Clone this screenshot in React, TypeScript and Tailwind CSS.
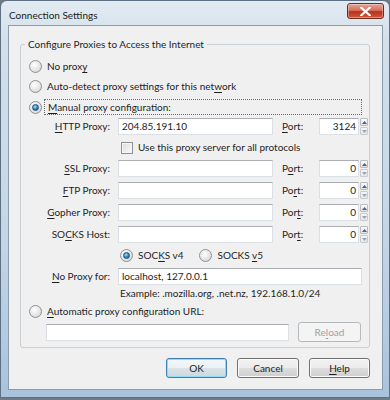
import React from "react";

const Radio = ({ checked = false }: { checked?: boolean }) => (
  <span className="flex h-[13px] w-[13px] shrink-0 items-center justify-center rounded-full border border-[#8e9296] bg-[radial-gradient(circle_at_40%_35%,#ffffff_0%,#eaeaea_45%,#c9cbcd_100%)]">
    {checked && (
      <span className="h-[7px] w-[7px] rounded-full border border-[#1d4f7c] bg-[radial-gradient(circle_at_40%_35%,#b7e3fb_0%,#3a8fc9_45%,#0f4a80_100%)]" />
    )}
  </span>
);

const Field = ({ value = "", className = "" }: { value?: string; className?: string }) => (
  <div
    className={
      "flex h-[17px] items-center border border-[#dbdfe6] border-t-[#abadb3] bg-white px-[3px] text-[#1e1e1e] " +
      className
    }
  >
    {value}
  </div>
);

const Spinner = ({ value }: { value: string }) => (
  <div className="flex h-[17px] items-stretch">
    <div className="flex w-[40px] items-center justify-end border border-[#dbdfe6] border-t-[#abadb3] bg-white pr-[2px] text-[#1e1e1e]">
      {value}
    </div>
    <div className="ml-[1px] flex w-[8px] flex-col gap-[1px]">
      <div className="flex flex-1 items-center justify-center rounded-[1px] border border-[#b8bcc0] bg-[linear-gradient(#fbfbfb,#e3e3e3)]">
        <svg width="5" height="3" viewBox="0 0 5 3">
          <path d="M0 3 L2.5 0 L5 3 Z" fill="#4d6185" />
        </svg>
      </div>
      <div className="flex flex-1 items-center justify-center rounded-[1px] border border-[#c8cbce] bg-[linear-gradient(#f5f5f5,#e6e6e6)]">
        <svg width="5" height="3" viewBox="0 0 5 3">
          <path d="M0 0 L2.5 3 L5 0 Z" fill="#9aa4b4" />
        </svg>
      </div>
    </div>
  </div>
);

const U = ({ children }: { children: React.ReactNode }) => (
  <span className="underline decoration-[1px] underline-offset-[2px]">{children}</span>
);

const Label = ({ children }: { children: React.ReactNode }) => (
  <div className="flex h-[17px] items-center justify-end text-[#1e1e1e]">{children}</div>
);

const PortLabel = ({ children }: { children: React.ReactNode }) => (
  <div className="flex h-[17px] items-center text-[#1e1e1e]">{children}</div>
);

const Button = ({
  children,
  variant = "normal",
  className = "",
}: {
  children: React.ReactNode;
  variant?: "normal" | "default" | "disabled";
  className?: string;
}) => {
  const styles =
    variant === "default"
      ? "border-[#3c7fb1] shadow-[inset_0_0_0_1px_#8fdcf7] bg-[linear-gradient(#f4f8fa_0%,#eaf0f3_50%,#dbe3e8_50%,#ccd7dd_100%)] text-[#1e1e1e]"
      : variant === "disabled"
      ? "border-[#b5b9bc] bg-[#f4f4f4] text-[#a0a0a0]"
      : "border-[#707070] shadow-[inset_0_0_0_1px_#fcfcfc] bg-[linear-gradient(#f2f2f2_0%,#ebebeb_50%,#dddddd_50%,#cfcfcf_100%)] text-[#1e1e1e]";
  return (
    <div
      className={
        "flex h-[20px] items-center justify-center rounded-[3px] border " + styles + " " + className
      }
    >
      {children}
    </div>
  );
};

export default function App() {
  return (
    <div
      className="h-[400px] w-[390px] overflow-hidden bg-[#6f7a85] text-[10px] leading-[13px]"
      style={{ fontFamily: "Lato, 'Open Sans', 'Liberation Sans', sans-serif" }}
    >
      <div className="flex h-[398px] w-[390px] flex-col rounded-t-[7px] border border-[#5d7084] bg-[linear-gradient(180deg,#e2ebf2_0%,#d3e0ea_10%,#c4d6e6_60%,#a9c3dc_100%)] pb-[7px] pl-[7px] pr-[6px]">
        {/* Title bar */}
        <div className="flex h-[24px] items-start justify-between">
          <div className="pl-[1px] pt-[7px] text-[10px] leading-[14px] text-[#1c1c1c]">
            Connection Settings
          </div>
          <div className="mr-[-1px] mt-[2px] flex h-[16px] w-[37px] items-center justify-center rounded-[3px] border border-[#6e2a22] bg-[linear-gradient(#e7a597_0%,#d4725f_45%,#b8321c_55%,#cc5a3c_100%)] shadow-[inset_0_0_0_1px_rgba(255,255,255,0.35)]">
            <svg width="11" height="9" viewBox="0 0 11 9">
              <path
                d="M1 0.5 L5.5 4.5 L10 0.5 M1 8.5 L5.5 4.5 L10 8.5"
                stroke="#ffffff"
                strokeWidth="2.2"
                fill="none"
                strokeLinecap="square"
              />
            </svg>
          </div>
        </div>

        {/* Client area */}
        <div className="flex flex-1 flex-col border border-[#8a9cae] bg-[#f0f0f0] pl-[11px] pr-[12px]">
          <fieldset className="mt-[11px] w-[350px] rounded-[3px] border border-[#c9cfd4] pb-[5px] pl-[8px]">
            <legend className="ml-[-4px] px-[3px] text-[10px] leading-[15px] text-[#1e1e1e]">
              Configure Proxies to Access the Internet
            </legend>

            <div className="mt-[4px] flex h-[20px] items-center gap-[5px] text-[#1e1e1e]">
              <Radio />
              <span>
                No prox<U>y</U>
              </span>
            </div>
            <div className="flex h-[20px] items-center gap-[5px] text-[#1e1e1e]">
              <Radio />
              <span>
                Auto-detect proxy settings for this net<U>w</U>ork
              </span>
            </div>
            <div className="mt-[1px] flex h-[20px] items-center gap-[2px] text-[#1e1e1e]">
              <Radio checked />
              <span className="flex h-[16px] w-[318px] items-center border border-dotted border-[#6b6b6b] pl-[3px]">
                <span>
                  <U>M</U>anual proxy configuration:
                </span>
              </span>
            </div>

            <div className="mt-[1px] grid grid-cols-[70px_155px_30px_49px] gap-x-[8px] gap-y-[5px] pl-[11px]">
              <Label>
                <span>
                  <U>H</U>TTP Proxy:
                </span>
              </Label>
              <Field value="204.85.191.10" />
              <PortLabel>
                <span className="ml-[1px]">
                  <U>P</U>ort:
                </span>
              </PortLabel>
              <Spinner value="3124" />

              <div />
              <div className="col-span-3 flex h-[15px] items-center gap-[5px] pl-[3px] text-[#1e1e1e]">
                <span className="h-[12px] w-[12px] border border-[#8e9296] bg-[linear-gradient(135deg,#dcdcdc,#fbfbfb)] shadow-[inset_0_0_0_1px_#f4f4f4]" />
                <span>Use this proxy server for all protocols</span>
              </div>

              <Label>
                <span>
                  <U>S</U>SL Proxy:
                </span>
              </Label>
              <Field />
              <PortLabel>
                <span className="ml-[1px]">
                  P<U>o</U>rt:
                </span>
              </PortLabel>
              <Spinner value="0" />

              <Label>
                <span>
                  <U>F</U>TP Proxy:
                </span>
              </Label>
              <Field />
              <PortLabel>
                <span className="ml-[1px]">
                  Po<U>r</U>t:
                </span>
              </PortLabel>
              <Spinner value="0" />

              <Label>
                <span>
                  <U>G</U>opher Proxy:
                </span>
              </Label>
              <Field />
              <PortLabel>
                <span className="ml-[1px]">
                  Por<U>t</U>:
                </span>
              </PortLabel>
              <Spinner value="0" />

              <Label>
                <span>
                  SO<U>C</U>KS Host:
                </span>
              </Label>
              <Field />
              <PortLabel>
                <span className="ml-[1px]">
                  Por<U>t</U>:
                </span>
              </PortLabel>
              <Spinner value="0" />

              <div />
              <div className="col-span-3 flex h-[15px] items-center pl-[2px] text-[#1e1e1e]">
                <Radio checked />
                <span className="ml-[5px]">
                  SOC<U>K</U>S v4
                </span>
                <span className="ml-[16px]">
                  <Radio />
                </span>
                <span className="ml-[5px]">
                  SOCKS <U>v</U>5
                </span>
              </div>

              <Label>
                <span>
                  <U>N</U>o Proxy for:
                </span>
              </Label>
              <Field value="localhost, 127.0.0.1" className="col-span-3 w-[244px]" />
            </div>

            <div className="mt-[2px] h-[12px] pl-[91px] leading-[12px] text-[#1e1e1e]">
              Example: .mozilla.org, .net.nz, 192.168.1.0/24
            </div>

            <div className="mt-[3px] flex h-[18px] items-center gap-[5px] text-[#1e1e1e]">
              <Radio />
              <span>
                <U>A</U>utomatic proxy configuration URL:
              </span>
            </div>

            <div className="mt-[2px] flex h-[20px] items-center gap-[9px] pl-[17px]">
              <Field className="w-[243px]" />
              <Button variant="disabled" className="w-[63px]">
                <span>
                  Re<U>l</U>oad
                </span>
              </Button>
            </div>
          </fieldset>

          <div className="mt-[10px] flex justify-end gap-[10px]">
            <Button variant="default" className="w-[61px]">
              OK
            </Button>
            <Button className="w-[62px]">Cancel</Button>
            <Button className="w-[61px]">
              <span>
                <U>H</U>elp
              </span>
            </Button>
          </div>
        </div>
      </div>
    </div>
  );
}
